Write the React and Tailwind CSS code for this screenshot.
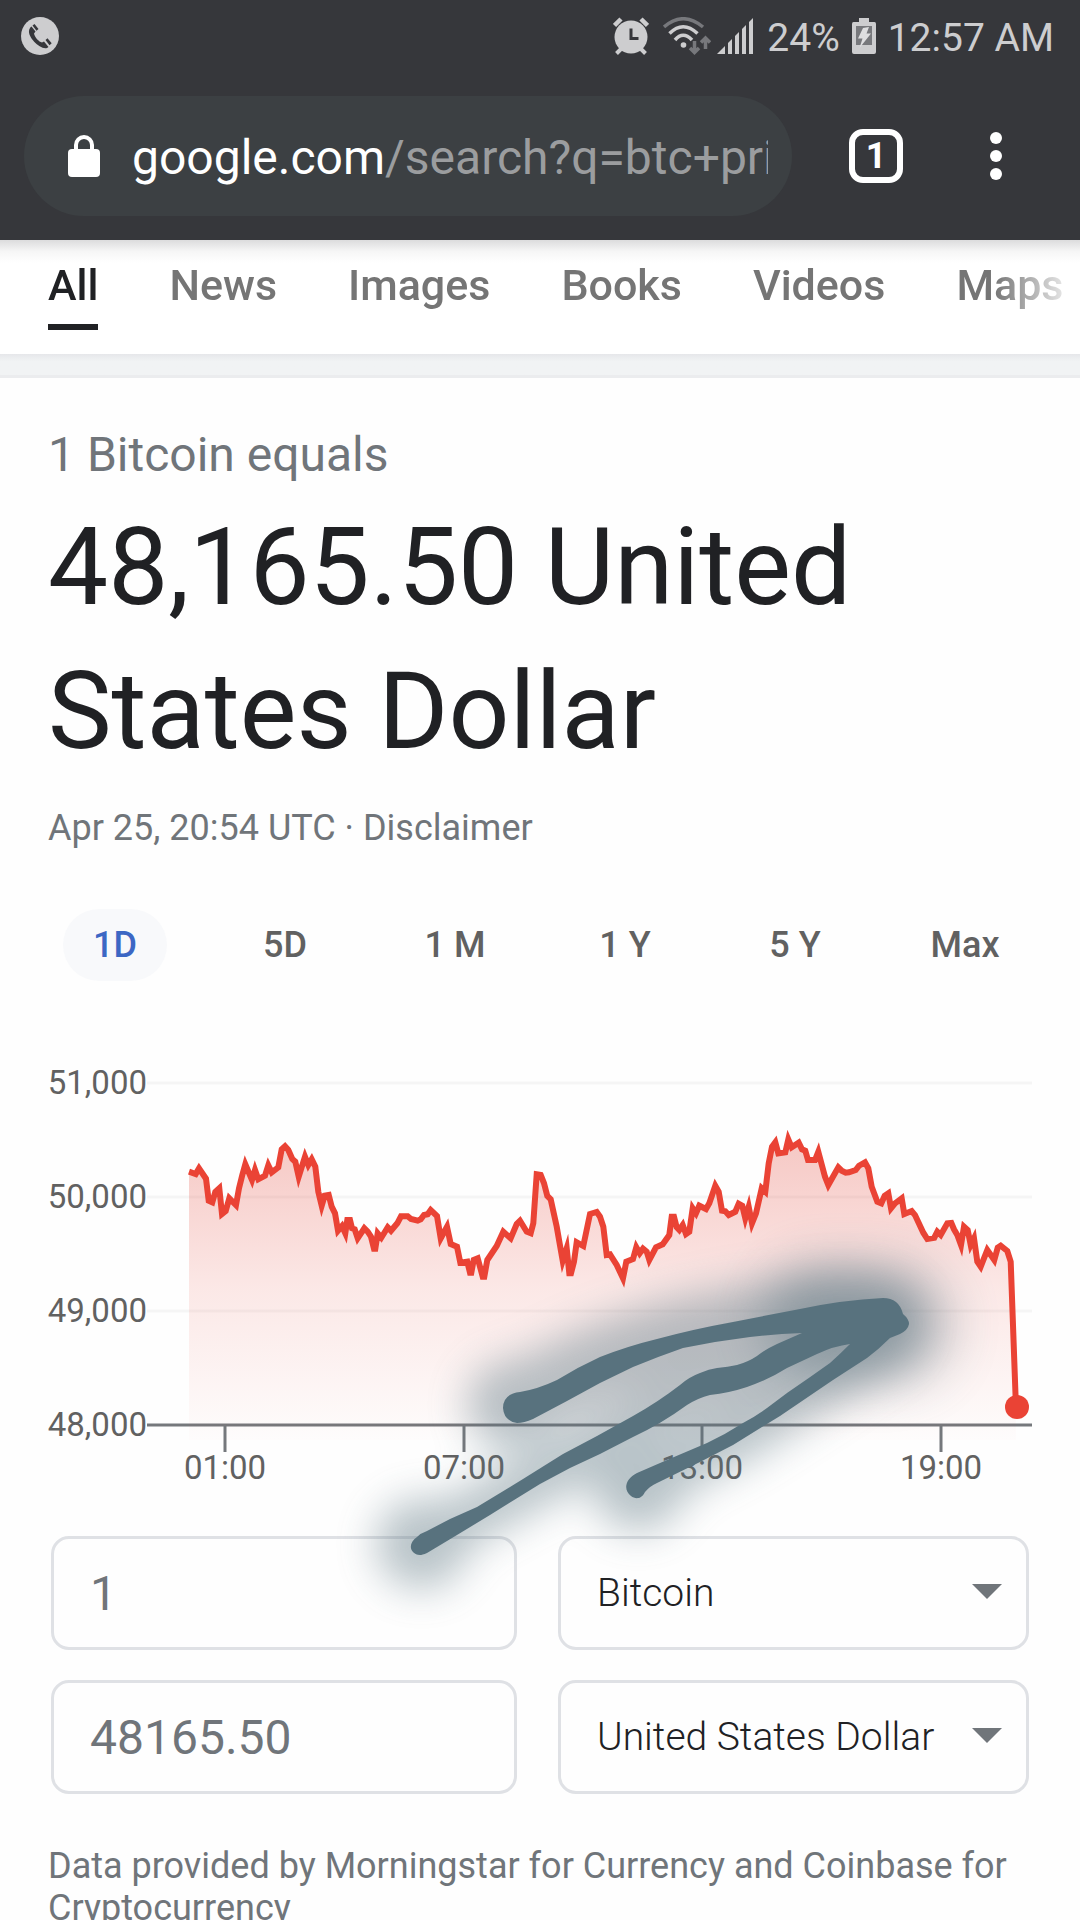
import React from "react";

const NAV_TABS = ["All", "News", "Images", "Books", "Videos", "Maps"];
const RANGES = ["1D", "5D", "1 M", "1 Y", "5 Y", "Max"];

const GRID = [
  { label: "51,000", y: 23 },
  { label: "50,000", y: 137 },
  { label: "49,000", y: 251 },
  { label: "48,000", y: 365 },
];
const TIMES = [
  { label: "01:00", x: 225 },
  { label: "07:00", x: 464 },
  { label: "13:00", x: 702 },
  { label: "19:00", x: 941 },
];

// Price samples in thirds of a chart unit: [x, y]
const SAMPLES = [
  [567, 335], [587, 342], [597, 325], [618, 356], [626, 422], [637, 427], [646, 396], [658, 385],
  [666, 462], [677, 453], [688, 415], [708, 435], [717, 385], [727, 345], [736, 313], [756, 360],
  [765, 330], [775, 358], [795, 347], [805, 316], [815, 337], [835, 322], [845, 268], [855, 259],
  [865, 270], [877, 297], [886, 305], [896, 350], [915, 290], [925, 315], [935, 298], [946, 320],
  [955, 395], [965, 437], [974, 407], [986, 405], [995, 440], [1005, 460], [1014, 512], [1026, 498],
  [1036, 520], [1042, 480], [1050, 480], [1056, 505], [1064, 508], [1073, 535], [1093, 505], [1103, 515],
  [1113, 530], [1122, 566], [1126, 566], [1133, 520], [1144, 533], [1163, 502], [1173, 512], [1192, 490],
  [1203, 469], [1223, 469], [1233, 477], [1253, 482], [1262, 478], [1272, 465], [1283, 463], [1292, 450],
  [1311, 468], [1322, 535], [1341, 500], [1352, 552], [1371, 560], [1381, 608], [1402, 605], [1410, 638],
  [1414, 638], [1421, 600], [1433, 595], [1448, 650], [1453, 650], [1462, 600], [1490, 558], [1510, 515],
  [1532, 535], [1550, 492], [1560, 482], [1580, 515], [1592, 520], [1600, 490], [1610, 343], [1622, 345],
  [1632, 370], [1642, 408], [1652, 418], [1670, 500], [1688, 602], [1700, 565], [1708, 640], [1713, 640],
  [1722, 605], [1730, 547], [1750, 558], [1770, 462], [1790, 456], [1800, 470], [1810, 500], [1820, 585],
  [1830, 583], [1850, 615], [1869, 655], [1879, 605], [1899, 597], [1909, 562], [1919, 580], [1929, 566],
  [1940, 575], [1948, 600], [1968, 562], [1988, 553], [2008, 525], [2015, 470], [2022, 470], [2030, 502],
  [2038, 510], [2048, 495], [2058, 522], [2068, 515], [2078, 445], [2088, 460], [2098, 437], [2118, 447],
  [2128, 430], [2146, 377], [2156, 395], [2166, 452], [2176, 454], [2186, 465], [2206, 455], [2216, 431],
  [2227, 437], [2236, 475], [2246, 440], [2256, 490], [2268, 460], [2285, 385], [2296, 395], [2306, 310],
  [2316, 260], [2326, 247], [2335, 280], [2356, 277], [2365, 238], [2375, 262], [2396, 248], [2406, 268],
  [2416, 272], [2424, 300], [2445, 300], [2455, 275], [2475, 350], [2485, 375], [2515, 322], [2525, 332],
  [2537, 338], [2547, 337], [2567, 330], [2577, 317], [2595, 307], [2605, 325], [2615, 380], [2632, 425],
  [2644, 430], [2654, 407], [2665, 400], [2673, 445], [2685, 430], [2705, 415], [2713, 462], [2735, 453],
  [2745, 465], [2770, 518], [2782, 537], [2803, 533], [2812, 515], [2822, 525], [2842, 490], [2854, 489],
  [2862, 508], [2872, 525], [2883, 555], [2892, 500], [2903, 510], [2912, 555], [2922, 535], [2932, 605],
  [2942, 620], [2962, 570], [2983, 600], [2993, 563], [3002, 557], [3022, 573], [3032, 605], [3047, 1020],
];
const LINE = SAMPLES.map(([x, y]) => `${(x / 3).toFixed(1)},${(y / 3).toFixed(1)}`).join(" ");
const AREA = `189,380 ${LINE} 1016,380`;

const ARROW_OUTLINE =
  "M503 148Q503 134 520 132Q538 129 557 120Q578 107 600 97Q628 86 657 79Q694 69 733 62L800 49Q842 40 883 38Q899 38 903 54Q909 59 909 64Q908 70 900 74L890 78Q879 89 867 98L833 120L780 156L733 185L700 202L657 223Q650 226 645 232C641 240 635 239 631 236C623 230 625 219 637 213L667 200L707 183Q726 174 743 163Q756 156 767 148L787 133Q809 118 830 103Q840 94 850 84Q834 86 817 94L787 108Q768 120 747 127Q729 133 710 135Q698 138 687 145Q661 164 633 177L600 194L570 208L540 224L490 255L457 275L427 293Q422 295 420 295C410 294 407 284 417 277Q421 273 427 271L450 259L477 247L523 219L563 194L597 176L633 156Q658 142 680 125Q689 117 700 113Q709 109 717 108Q728 107 737 105Q748 102 757 96Q766 89 777 84L802 73Q776 74 750 77Q717 81 683 88Q657 97 633 107L600 123L567 141L533 159Q524 163 517 163Q504 161 503 148Z";

function PhoneIcon() {
  return (
    <svg className="size-[38px]" viewBox="0 0 38 38" role="img" aria-label="Call">
      <circle cx="19" cy="19" r="19" fill="#cdcdcf" />
      <path
        d="M8 14c-1 6 11 19 18 17l1.500-1-4.500-5.500-2 1c-3-.5-7.500-5.500-8-9l1.500-2-4-5c-1.500 1-2.300 2.500-2.500 4.500ZM11.500 8.500l2-1.500 4 5-2 1.700ZM24.500 23l2-1.700 4.200 5-2.200 2Z"
        fill="#36373b"
      />
    </svg>
  );
}

function AlarmIcon() {
  return (
    <svg className="h-[38px] w-9" viewBox="0 0 36 38" role="img" aria-label="Alarm">
      <circle cx="18" cy="20" r="16.500" fill="#cdcdcf" />
      <path d="M1.500 8.500 8 2M34.500 8.500 28 2" stroke="#cdcdcf" strokeWidth="4.500" />
      <path d="m3.500 36.500 5-5M32.500 36.500l-5-5" stroke="#cdcdcf" strokeWidth="4" />
      <path d="M18 11.500v10h7.500" fill="none" stroke="#36373b" strokeWidth="3" />
    </svg>
  );
}

function WifiIcon() {
  return (
    <svg className="h-[38px] w-12" viewBox="0 0 48 38" role="img" aria-label="Wi-Fi">
      <g fill="none" strokeWidth="3.500">
        <path d="M1 10Q20-6.500 40 10" stroke="#77787c" />
        <path d="M6.500 16.500Q20 3 34.500 16.500M12 23Q20 13.500 29 23" stroke="#cdcdcf" />
        <path d="M31.500 24v11M27 31l4.500 4.500L36 31M42.500 32V21M38 25.500l4.500-4.500 4.500 4.500" stroke="#77787c" />
      </g>
      <circle cx="20.500" cy="28" r="2.800" fill="#cdcdcf" />
    </svg>
  );
}

function SignalIcon() {
  return (
    <svg className="h-[38px] w-9" viewBox="0 0 36 38" role="img" aria-label="Signal">
      <path
        d="M0 37 8 29v8ZM11 26l4-4v15h-4ZM18 19l4-4v22h-4ZM25 12l4-4v29h-4ZM32 5l4-4v36h-4Z"
        fill="#cdcdcf"
      />
    </svg>
  );
}

function BatteryIcon() {
  return (
    <svg className="h-[38px] w-6" viewBox="0 0 24 38" role="img" aria-label="Charging">
      <path d="M7 1h10v4h5.500Q24 5 24 7v28q0 2-2 2H2q-2 0-2-2V7q0-2 1.500-2H7Z" fill="#cdcdcf" />
      <path d="M4 9h16v19H4Z" fill="#77787c" />
      <path d="m11 11 6-1-2.500 6.500H19L7.500 31l3-9.500H6Z" fill="#dedee0" />
    </svg>
  );
}

function StatusBar() {
  return (
    <div className="flex h-[72px] items-center pl-[21px] pr-[26px] text-[39px] leading-[40px] text-[#cdcdcf]">
      <PhoneIcon />
      <div className="ml-auto flex items-center">
        <AlarmIcon />
        <span className="ml-[14px]"><WifiIcon /></span>
        <span className="ml-1.5"><SignalIcon /></span>
        <span className="ml-3.5 pt-[3px]">24%</span>
        <span className="ml-3"><BatteryIcon /></span>
        <span className="ml-3 pt-[3px]">12:57 AM</span>
      </div>
    </div>
  );
}

function BrowserBar() {
  return (
    <div className="flex h-[168px] items-center pl-6 pr-[66px] text-white">
      <button className="flex h-[120px] min-w-0 flex-1 items-center rounded-full bg-[#3c4043] pl-[44px] pr-6 text-left">
        <svg className="h-[42px] w-8 shrink-0" viewBox="0 0 32 42" aria-label="Secure" role="img">
          <rect y="14" width="32" height="28" rx="4" fill="#fff" />
          <path d="M8 16V10a8 8 0 0 1 16 0v6" fill="none" stroke="#fff" strokeWidth="4" />
        </svg>
        <span className="ml-8 min-w-0 flex-1 overflow-hidden whitespace-nowrap pt-[3px] text-[48px] leading-[60px]">
          google.com<span className="text-[#9b9d9f]">/search?q=btc+pri</span>
        </span>
      </button>
      <button
        aria-label="Open tabs"
        className="ml-[57px] flex h-[54px] w-[54px] items-center justify-center rounded-[14px] border-6 border-white text-[36px] font-bold leading-none"
      >
        1
      </button>
      <button aria-label="Menu" className="ml-[75px] flex w-9 flex-col items-center gap-1.5">
        <span className="size-3 rounded-full bg-white" />
        <span className="size-3 rounded-full bg-white" />
        <span className="size-3 rounded-full bg-white" />
      </button>
    </div>
  );
}

function SearchTabs() {
  return (
    <nav className="h-[114px] overflow-hidden bg-linear-to-b from-[#dcdcdd] via-[#f6f6f6] via-10% to-white to-20%">
      <div className="flex gap-[71px] whitespace-nowrap mask-r-from-92% mask-r-to-100% pl-12">
        {NAV_TABS.map((tab, i) => (
          <a
            key={tab}
            href="#"
            className={
              i === 0
                ? "border-b-6 border-[#202124] pb-[15px] pt-[21px] text-[43px] font-medium leading-[48px] text-[#202124]"
                : "pb-[15px] pt-[21px] text-[43px] font-medium leading-[48px] text-[#757575]"
            }
          >
            {tab}
          </a>
        ))}
      </div>
    </nav>
  );
}

function PriceChart() {
  return (
    <svg className="mt-[79px] block w-full" viewBox="0 0 1080 440" role="img" aria-label="Bitcoin price over one day">
      <defs>
        <linearGradient id="fall" x1="0" y1="80" x2="0" y2="380" gradientUnits="userSpaceOnUse">
          <stop offset="0" stopColor="#e24a3d" stopOpacity="0.3" />
          <stop offset="0.500" stopColor="#e8473a" stopOpacity="0.120" />
          <stop offset="1" stopColor="#ea4335" stopOpacity="0.010" />
        </linearGradient>
      </defs>
      {GRID.map(({ label, y }) => (
        <g key={label}>
          <line
            x1="147"
            x2="1032"
            y1={y}
            y2={y}
            stroke={label === "48,000" ? "#75787c" : "#f5f5f5"}
            strokeWidth="3"
          />
          <text x="147" y={y + 11} textAnchor="end" fontSize="33" fill="#616161">
            {label}
          </text>
        </g>
      ))}
      <polygon points={AREA} fill="url(#fall)" />
      <polyline points={LINE} fill="none" stroke="#ea4335" strokeWidth="6" strokeMiterlimit="5" />
      <circle cx="1017" cy="347" r="12" fill="#ea4335" />
      {TIMES.map(({ label, x }) => (
        <g key={label}>
          <line x1={x} x2={x} y1="366" y2="392" stroke="#75787c" strokeWidth="3" />
          <text x={x} y="419" textAnchor="middle" fontSize="33" fill="#616161">
            {label}
          </text>
        </g>
      ))}
    </svg>
  );
}

function ArrowDoodle() {
  return (
    <svg
      className="pointer-events-none absolute inset-x-0 top-[200px] w-full overflow-visible"
      viewBox="0 0 1080 360"
      aria-hidden="true"
    >
      <defs>
        <filter id="glow" x="280" y="-120" width="800" height="540" filterUnits="userSpaceOnUse">
          <feGaussianBlur stdDeviation="20" />
        </filter>
        <filter id="tipGlow" x="660" y="-140" width="420" height="420" filterUnits="userSpaceOnUse">
          <feGaussianBlur stdDeviation="26" />
        </filter>
      </defs>
      <g filter="url(#glow)" opacity="0.42" stroke="#58727e" fill="none" strokeLinecap="round" strokeLinejoin="round">
        <path d="M520 142Q620 84 740 64T880 58" strokeWidth="76" />
        <path d="M422 283 L600 185 Q700 120 760 108 L890 66" strokeWidth="52" />
        <path d="M638 226 L740 172 L885 78" strokeWidth="56" />
        <path d="M421 284h1M638 226h1M512 145h1" strokeWidth="90" />
      </g>
      <g filter="url(#tipGlow)" opacity="0.45" stroke="#58727e" fill="none" strokeLinecap="round">
        <path d="M820 62L892 64" strokeWidth="112" />
      </g>
      <path d={ARROW_OUTLINE} fill="#58727e" />
    </svg>
  );
}

function AmountField({ label, value }) {
  return (
    <input
      aria-label={label}
      defaultValue={value}
      className="h-[114px] w-full min-w-0 rounded-[18px] border-3 border-[#dfe1e5] bg-transparent px-9 text-[48px] text-[#70757a]"
    />
  );
}

function CurrencySelect({ label, value }) {
  return (
    <div className="relative min-w-0">
      <select
        aria-label={label}
        defaultValue={value}
        className="h-[114px] w-full appearance-none rounded-[18px] border-3 border-[#dfe1e5] bg-transparent pl-9 pr-20 text-[39px] font-light text-[#202124]"
      >
        <option>Bitcoin</option>
        <option>United States Dollar</option>
      </select>
      <svg className="pointer-events-none absolute right-[27px] top-12 h-[15px] w-[30px]" viewBox="0 0 30 15" aria-hidden="true">
        <path d="M0 0h30L15 15Z" fill="#70757a" />
      </svg>
    </div>
  );
}

export default function App() {
  return (
    <div className="h-screen overflow-hidden bg-[#fefefe] font-[Roboto,sans-serif]">
      <header className="bg-[#36373b]">
        <StatusBar />
        <BrowserBar />
      </header>
      <SearchTabs />
      <div className="h-6 border-b-3 border-[#ebecee] bg-linear-to-b from-[#e6e7ea] to-[#f1f3f4] to-35%" />
      <main>
        <section className="px-12 pt-[49px]">
          <p className="text-[48px] leading-[56px] text-[#70757a]">1 Bitcoin equals</p>
          <h1 className="mt-[13px] text-[107px] leading-[144px] text-[#202124]">48,165.50 United States Dollar</h1>
          <p className="mt-5 text-[36px] leading-[48px] text-[#70757a]">
            Apr 25, 20:54 UTC · <a href="#">Disclaimer</a>
          </p>
        </section>
        <div className="mt-[57px] grid grid-cols-6 px-[30px]">
          {RANGES.map((range, i) => (
            <button
              key={range}
              className={
                i === 0
                  ? "mx-auto h-[72px] rounded-full bg-[#f8f9fb] px-[30px] text-[36px] font-medium text-[#3c67c4]"
                  : "mx-auto h-[72px] rounded-full px-[30px] text-[36px] font-medium text-[#616161]"
              }
            >
              {range}
            </button>
          ))}
        </div>
        <div className="relative">
          <PriceChart />
          <form className="mt-9 grid grid-cols-[466fr_471fr] gap-x-[41px] gap-y-[30px] px-[51px]">
            <AmountField label="Amount to convert" value="1" />
            <CurrencySelect label="From currency" value="Bitcoin" />
            <AmountField label="Converted amount" value="48165.50" />
            <CurrencySelect label="To currency" value="United States Dollar" />
          </form>
          <ArrowDoodle />
        </div>
        <p className="mt-[51px] px-12 text-[36px] leading-[42px] text-[#70757a]">
          Data provided by Morningstar for Currency and Coinbase for Cryptocurrency
        </p>
      </main>
    </div>
  );
}
